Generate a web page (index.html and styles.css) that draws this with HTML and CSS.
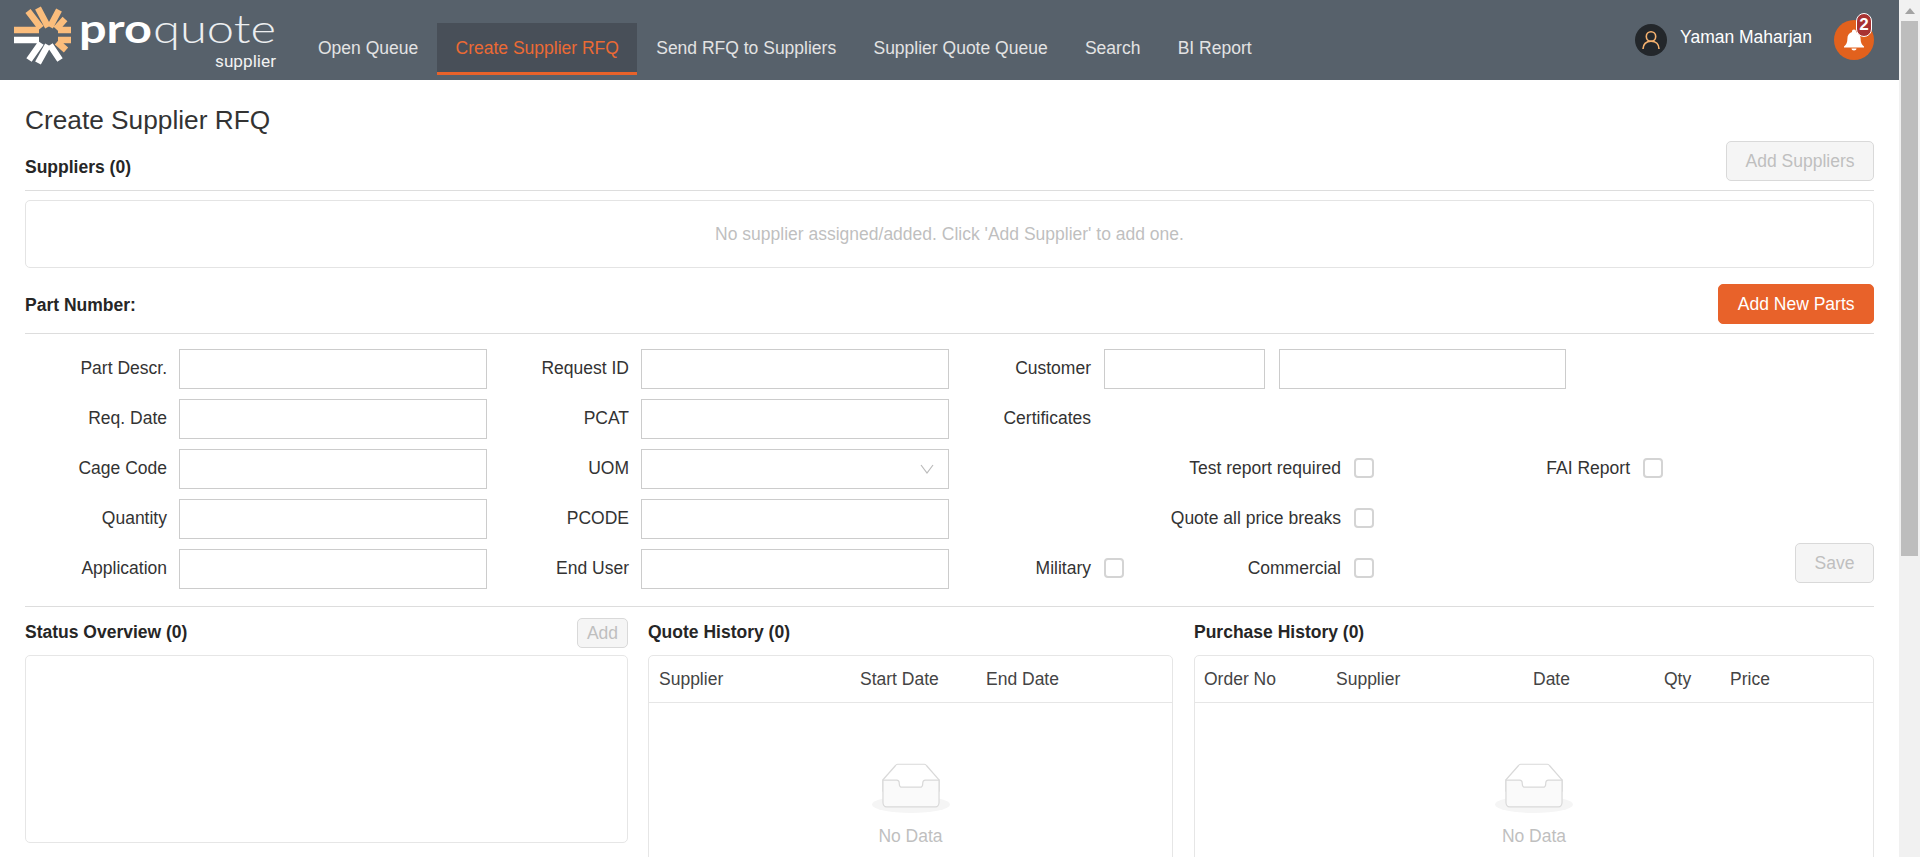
FILE: index.html
```html
<!DOCTYPE html>
<html lang="en">
<head>
	<meta charset="UTF-8">
	<title>Create Supplier RFQ</title>
	<link rel="stylesheet" href="styles.css">
</head>
<body>
<div class="app">
	<div class="main">
		<header class="topbar">
			<svg class="logo" width="299" height="80" viewBox="0 0 299 80">
				<g fill="none" stroke="#fbbd7c" stroke-width="6.5">
					<path d="M14 30H39M28 11L41 28M38 8L48 27M59 10L50 27M65 19L56 29M58 30H71M58 40H71M57 42L66 50"/>
				</g>
				<g fill="none" stroke="#fff" stroke-width="6.5">
					<path d="M14 40H39M29 60L41 43M38 63L48 45M60 60L50 45"/>
				</g>
				<text class="logo-pro" x="79" y="43" textLength="73" lengthAdjust="spacingAndGlyphs">pro</text>
				<text class="logo-quote" x="153" y="43" textLength="123" lengthAdjust="spacingAndGlyphs">quote</text>
				<text class="logo-sub" x="215" y="67" textLength="61" lengthAdjust="spacingAndGlyphs">supplier</text>
			</svg>
			<nav class="nav">
				<a href="#" class="nav-item">Open Queue</a>
				<a href="#" class="nav-item active">Create Supplier RFQ</a>
				<a href="#" class="nav-item">Send RFQ to Suppliers</a>
				<a href="#" class="nav-item">Supplier Quote Queue</a>
				<a href="#" class="nav-item">Search</a>
				<a href="#" class="nav-item">BI Report</a>
			</nav>
			<div class="user">
				<span class="avatar">
					<svg width="20" height="20" viewBox="0 0 20 20" fill="none" stroke="#f6b26f" stroke-width="1.6">
						<circle cx="10" cy="6.5" r="4.7"/>
						<path d="M2 19c0-4.5 3-7.8 8-7.8s8 3.300 8 7.800"/>
					</svg>
				</span>
				<span class="user-name">Yaman Maharjan</span>
				<span class="bell">
					<svg width="22" height="22" viewBox="0 0 22 22" fill="#fff">
						<path d="M11 0.500c1.200 0 2 .8 2 2v.6c3 .9 4.600 3.400 4.600 6.600 0 4 1 5.600 3.400 7.800v1H1v-1c2.400-2.200 3.400-3.800 3.400-7.800 0-3.200 1.600-5.700 4.600-6.600v-.6c0-1.200.8-2 2-2z"/>
						<path d="M8.500 19.500h5c0 1.200-1.100 2-2.500 2s-2.500-.8-2.500-2z"/>
					</svg>
					<span class="badge">2</span>
				</span>
			</div>
		</header>

		<div class="content">
			<h1 class="page-title">Create Supplier RFQ</h1>

			<div class="section-head">
				<b class="head-low">Suppliers (0)</b>
				<button class="btn" disabled>Add Suppliers</button>
			</div>
			<div class="no-supplier">No supplier assigned/added. Click 'Add Supplier' to add one.</div>

			<div class="section-head part-head">
				<b>Part Number:</b>
				<button class="btn btn-primary">Add New Parts</button>
			</div>

			<form class="part-form">
				<label class="lbl">Part Descr.</label>
				<input class="inp" type="text">
				<label class="lbl">Request ID</label>
				<input class="inp" type="text">
				<label class="lbl lbl-wide">Customer</label>
				<div class="customer">
					<input class="inp inp-short" type="text">
					<input class="inp inp-long" type="text">
				</div>

				<label class="lbl">Req. Date</label>
				<input class="inp" type="text">
				<label class="lbl">PCAT</label>
				<input class="inp" type="text">
				<label class="lbl lbl-wide">Certificates</label>
				<div></div>

				<label class="lbl">Cage Code</label>
				<input class="inp" type="text">
				<label class="lbl">UOM</label>
				<div class="inp select">
					<svg width="14" height="10" viewBox="0 0 14 10" fill="none" stroke="#bbb" stroke-width="1.200"><path d="M1 1l6 8 6-8"/></svg>
				</div>
				<div></div>
				<div class="checks">
					<label class="check">Test report required <input type="checkbox"></label>
					<label class="check">FAI Report <input type="checkbox"></label>
				</div>

				<label class="lbl">Quantity</label>
				<input class="inp" type="text">
				<label class="lbl">PCODE</label>
				<input class="inp" type="text">
				<div></div>
				<div class="checks">
					<label class="check">Quote all price breaks <input type="checkbox"></label>
				</div>

				<label class="lbl">Application</label>
				<input class="inp" type="text">
				<label class="lbl">End User</label>
				<input class="inp" type="text">
				<label class="lbl lbl-wide">Military</label>
				<div class="checks">
					<div class="check split">
						<input type="checkbox">
						<label class="check nested">Commercial <input type="checkbox"></label>
					</div>
					<button class="btn btn-save" disabled>Save</button>
				</div>
			</form>

			<div class="history">
				<section>
					<div class="history-head">
						<b>Status Overview (0)</b>
						<button class="btn btn-small" disabled>Add</button>
					</div>
					<div class="panel status-panel"></div>
				</section>
				<section class="quote-history">
					<div class="history-head"><b>Quote History (0)</b></div>
					<div class="panel">
						<div class="table-head quote-cols">
							<span>Supplier</span><span>Start Date</span><span>End Date</span>
						</div>
						<div class="empty">
							<svg width="78" height="50" viewBox="0 0 64 41">
								<g transform="translate(0 1)" fill="none" fill-rule="evenodd">
									<ellipse fill="#f5f5f5" cx="32" cy="33" rx="32" ry="7"/>
									<g fill-rule="nonzero" stroke="#d9d9d9">
										<path d="M55 12.760L44.854 1.258C44.367.474 43.656 0 42.907 0H21.093c-.749 0-1.460.474-1.947 1.257L9 12.761V22h46v-9.240z"/>
										<path d="M41.613 15.931c0-1.605.994-2.930 2.227-2.931H55v18.137C55 33.260 53.680 35 52.050 35h-40.100C10.320 35 9 33.259 9 31.137V13h11.160c1.233 0 2.227 1.323 2.227 2.928v.022c0 1.605 1.005 2.901 2.237 2.901h14.752c1.232 0 2.237-1.308 2.237-2.913v-.007z" fill="#fafafa"/>
									</g>
								</g>
							</svg>
							<p>No Data</p>
						</div>
					</div>
				</section>
				<section>
					<div class="history-head"><b>Purchase History (0)</b></div>
					<div class="panel">
						<div class="table-head purchase-cols">
							<span>Order No</span><span>Supplier</span><span>Date</span><span>Qty</span><span>Price</span>
						</div>
						<div class="empty">
							<svg width="78" height="50" viewBox="0 0 64 41">
								<g transform="translate(0 1)" fill="none" fill-rule="evenodd">
									<ellipse fill="#f5f5f5" cx="32" cy="33" rx="32" ry="7"/>
									<g fill-rule="nonzero" stroke="#d9d9d9">
										<path d="M55 12.760L44.854 1.258C44.367.474 43.656 0 42.907 0H21.093c-.749 0-1.460.474-1.947 1.257L9 12.761V22h46v-9.240z"/>
										<path d="M41.613 15.931c0-1.605.994-2.930 2.227-2.931H55v18.137C55 33.260 53.680 35 52.050 35h-40.100C10.320 35 9 33.259 9 31.137V13h11.160c1.233 0 2.227 1.323 2.227 2.928v.022c0 1.605 1.005 2.901 2.237 2.901h14.752c1.232 0 2.237-1.308 2.237-2.913v-.007z" fill="#fafafa"/>
									</g>
								</g>
							</svg>
							<p>No Data</p>
						</div>
					</div>
				</section>
			</div>
		</div>
	</div>

	<div class="scrollbar">
		<div class="scroll-up"></div>
		<div class="scroll-thumb"></div>
	</div>
</div>
</body>
</html>
```

FILE: styles.css
```css
*{padding: 0; margin: 0; box-sizing: border-box;}
html, body{ height: 100%; overflow: hidden;}
body{ font-family: "Liberation Sans", Arial, sans-serif; font-size: 17.5px; color: #333; background: #fff;}

.app{ display: flex; height: 857px;}
.main{ flex: 1; min-width: 0; overflow: hidden;}

.scrollbar{ width: 21px; flex: none; background: #f1f1f1; padding: 0 2px;}
.scroll-up{ height: 21px; display: flex; align-items: center; justify-content: center;}
.scroll-up::before{ content: ""; border: 5px solid transparent; border-top: 0; border-bottom: 6px solid #a3a3a3;}
.scroll-thumb{ height: 535px; background: #bdbdbd;}

/* top bar */
.topbar{ display: flex; height: 80px; background: #57616b;}
.logo{ flex: none; display: block;}
.logo-pro{ font-family: Lato, sans-serif; font-size: 40px; fill: #fff; font-weight: 700;}
.logo-quote{ font-family: Lato, sans-serif; font-size: 40px; fill: #eceef0; font-weight: 300;}
.logo-sub{ font-family: Roboto, sans-serif; font-size: 17px; fill: #f2f2f2; font-weight: 400;}

.nav{ display: flex; height: 52px; margin-top: 23px;}
.nav-item{ display: block; padding: 0 18.3px 0 19px; line-height: 51px; color: #e3e3e3; text-decoration: none; border-bottom: 3px solid transparent; white-space: nowrap;}
.nav-item.active{ background: #484f58; color: #ec6a34; border-bottom-color: #e8622a;}

.user{ display: flex; align-items: center; margin-left: auto; padding-right: 25px;}
.avatar{ display: flex; align-items: center; justify-content: center; width: 32px; height: 32px; border-radius: 50%; background: #23272b;}
.user-name{ margin-left: 13px; color: #fff; position: relative; top: -3px;}
.bell{ position: relative; display: flex; align-items: center; justify-content: center; width: 40px; height: 40px; margin-left: 22px; border-radius: 50%; background: #e2611d;}
.badge{ position: absolute; left: 22px; top: -7px; width: 16px; height: 24px; border: 1px solid #fff; border-radius: 8px; background: #a83232; color: #fff; font-size: 17px; font-weight: bold; line-height: 21px; text-align: center;}

/* page */
.content{ padding: 25px 25px 0;}
.page-title{ font-size: 26.25px; font-weight: normal; line-height: 30px; color: #333;}

.section-head{ display: flex; justify-content: space-between; margin-top: 6px; padding-bottom: 9px; border-bottom: 1px solid #ddd;}
.section-head b{ color: #262626;}
.head-low{ line-height: 28px; align-self: flex-end;}
.part-head{ align-items: center; margin-top: 16px;}
.part-head b{ padding-top: 2px;}

.btn{ height: 40px; padding: 0 18.5px; border: 1px solid #d9d9d9; border-radius: 5px; background: #f5f5f5; color: #bfbfbf; font: inherit;}
.btn-primary{ border-color: #e8622a; background: #e8622a; color: #fff;}
.btn-small{ width: 51px; height: 30px; padding: 0;}

.no-supplier{ height: 68px; margin-top: 9px; border: 1px solid #e4e4e4; border-radius: 5px; line-height: 66px; text-align: center; color: #bfbfbf;}

/* part form */
.part-form{ display: grid; grid-template-columns: 154px 308px 154px 308px 155px 1fr; grid-auto-rows: 40px; row-gap: 10px; margin-top: 15px; padding-bottom: 17px; border-bottom: 1px solid #ddd;}
.lbl{ align-self: center; padding: 0 12px 2px 0; text-align: right;}
.lbl-wide{ padding-right: 13px;}
.inp{ width: 100%; height: 40px; border: 1px solid #ccc; background: #fff;}
.select{ display: flex; align-items: center; justify-content: flex-end; padding-right: 14px;}
.customer{ display: flex; gap: 14px;}
.inp-short{ width: 161px;}
.inp-long{ width: 287px;}

.checks{ display: grid; grid-template-columns: 270px 289px 1fr; align-items: center;}
.check{ display: flex; align-items: center; justify-content: flex-end; gap: 13px; padding-bottom: 2px; line-height: 18px;}
.check.nested{ padding-bottom: 0;}
.split{ justify-content: space-between;}
input[type=checkbox]{ appearance: none; width: 20px; height: 20px; border: 2px solid #d4d4d4; border-radius: 4px; background: #fff;}
.btn-save{ grid-column: 3; justify-self: end; align-self: start; width: 79px; margin-top: -6px; padding: 0;}

/* history row */
.history{ display: grid; grid-template-columns: 603px 526px 680px; column-gap: 20px; margin-top: 11px;}
.quote-history{ padding-right: 1px;}
.history-head{ display: flex; justify-content: space-between; align-items: center; height: 30px; margin-bottom: 7px;}
.history-head b{ padding-bottom: 2px; color: #262626;}
.panel{ border: 1px solid #e6e6e6; border-radius: 5px;}
.status-panel{ height: 188px;}
.table-head{ display: grid; height: 47px; align-items: center; border-bottom: 1px solid #e6e6e6; color: #444;}
.quote-cols{ grid-template-columns: 201px 126px 1fr; padding-left: 10px;}
.purchase-cols{ grid-template-columns: 132px 197px 131px 66px 1fr; padding-left: 9px;}
.empty{ height: 200px; padding-top: 60px; text-align: center;}
.empty svg{ display: block; margin: 0 auto;}
.empty p{ margin-top: 13px; color: #bfbfbf;}
```
